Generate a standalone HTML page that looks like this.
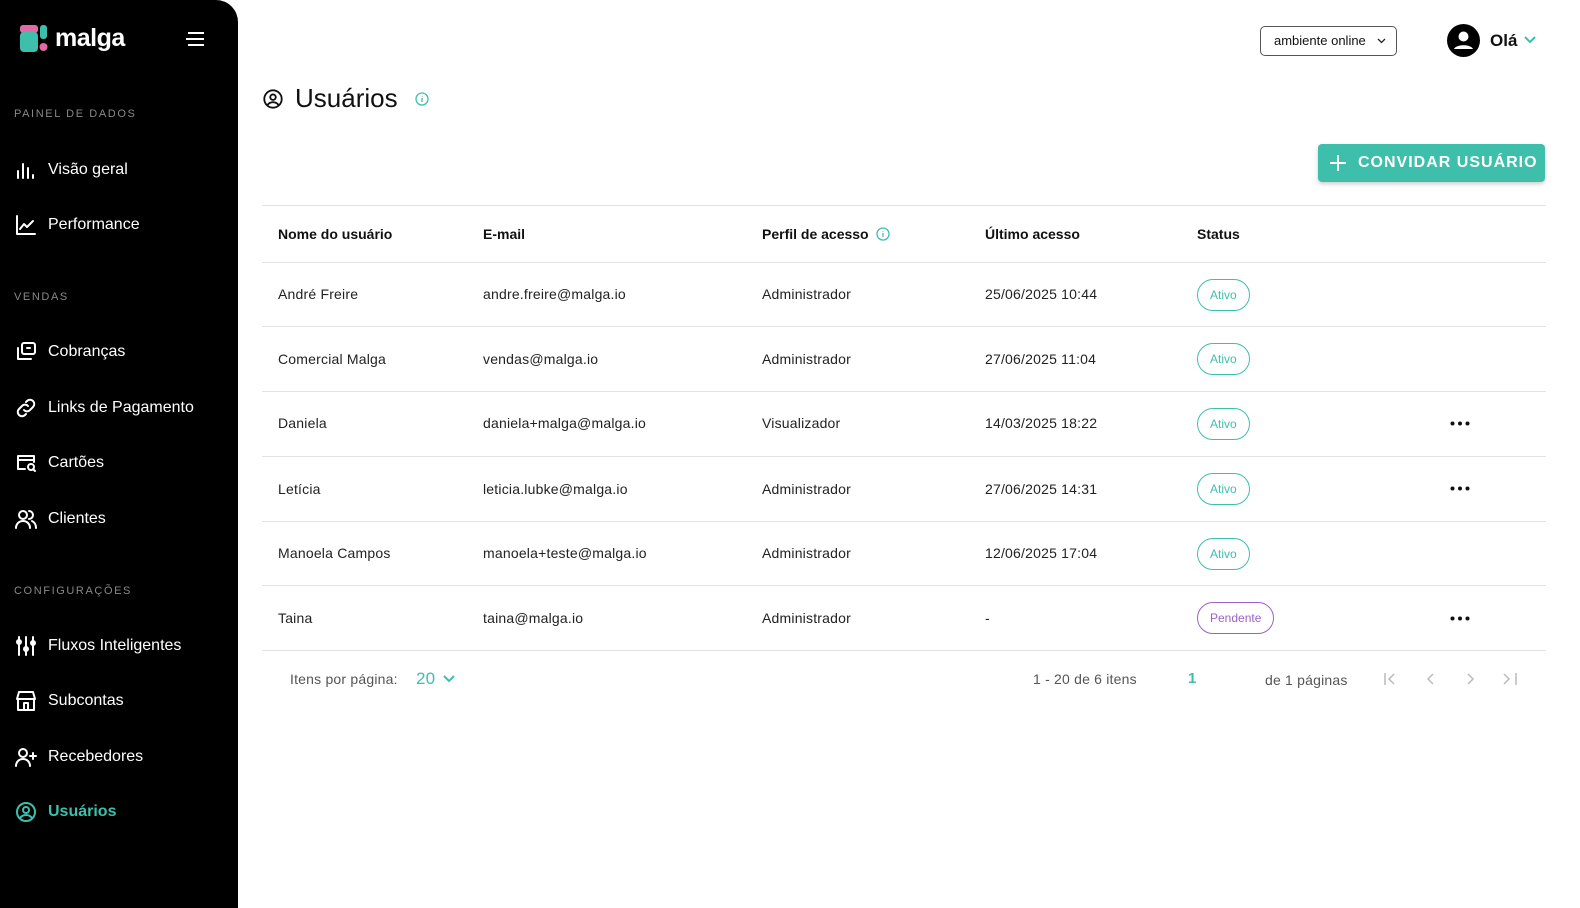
<!DOCTYPE html>
<html><head><meta charset="utf-8"><style>
*{box-sizing:border-box;margin:0;padding:0}
body{width:1580px;height:908px;background:#fff;font-family:"Liberation Sans",sans-serif;color:#111;position:relative;overflow:hidden}
.sb{position:absolute;left:0;top:0;width:238px;height:908px;background:#000;border-top-right-radius:22px;color:#fff}
.sec{position:absolute;left:14px;font-size:11px;letter-spacing:1.6px;color:#888}
.it{position:absolute;left:14px;display:flex;align-items:center;font-size:16px;color:#fff}
.it svg{width:24px;height:24px;margin-right:10px;fill:none;stroke:#fff;stroke-width:2;stroke-linecap:round;stroke-linejoin:round}
.abs{position:absolute}
.th{position:absolute;top:226px;font-size:14px;font-weight:bold;color:#111}
.line{position:absolute;left:262px;width:1284px;height:1px;background:#e3e3e3}
.cell{position:absolute;font-size:14px;color:#222;letter-spacing:.2px}
.badge{position:absolute;left:1197px;height:32px;border:1px solid #3dbfab;border-radius:16px;color:#3dbfab;font-size:12px;line-height:30px;padding:0 12px}
.dots{position:absolute;left:1450px}
</style></head><body>
<div class="sb">
  <svg class="abs" style="left:20px;top:25px" width="28" height="28" viewBox="0 0 28 28"><rect x="0" y="0" width="18" height="8" rx="3" fill="#e06aa6"/><rect x="0" y="7" width="18" height="20" rx="4" fill="#3dbfab"/><rect x="20" y="0" width="7" height="14" rx="3" fill="#3dbfab"/><circle cx="23.5" cy="22" r="4" fill="#e06aa6"/></svg>
  <div class="abs" style="left:55px;top:24px;font-size:25px;font-weight:bold;letter-spacing:-.5px">malga</div>
  <svg class="abs" style="left:184px;top:31px" width="22" height="16" viewBox="0 0 22 16" stroke="#fff" stroke-width="2"><path d="M4 2H20M2 8H20M4 14H20"/></svg>
  <div class="sec" style="top:108px">PAINEL DE DADOS</div>
  <div class="it" style="top:158px"><svg viewBox="0 0 24 24"><path d="M4 20V13M9 20V6M14 20V10M19 20V17"/></svg>Visão geral</div>
  <div class="it" style="top:213px"><svg viewBox="0 0 24 24"><path d="M3 3V21H21M6 16L10 11L13 14L19 8"/></svg>Performance</div>
  <div class="sec" style="top:291px">VENDAS</div>
  <div class="it" style="top:340px"><svg viewBox="0 0 24 24"><rect x="8" y="3" width="13" height="11" rx="2"/><path d="M4 8V19H17M13 8H16"/></svg>Cobranças</div>
  <div class="it" style="top:396px"><svg viewBox="0 0 24 24"><path d="M10 14a4 4 0 0 0 6 0l3-3a4 4 0 0 0-6-6l-1 1M14 10a4 4 0 0 0-6 0l-3 3a4 4 0 0 0 6 6l1-1"/></svg>Links de Pagamento</div>
  <div class="it" style="top:451px"><svg viewBox="0 0 24 24"><path d="M11 18H4V5H20V11M4 9H20"/><circle cx="17" cy="16" r="3"/><path d="M19 18L21 20"/></svg>Cartões</div>
  <div class="it" style="top:507px"><svg viewBox="0 0 24 24"><circle cx="9" cy="8" r="4"/><path d="M2 21c0-4 3-7 7-7s7 3 7 7M15 4a4 4 0 0 1 0 8M18 14c2 1 4 3 4 7"/></svg>Clientes</div>
  <div class="sec" style="top:585px">CONFIGURAÇÕES</div>
  <div class="it" style="top:634px"><svg viewBox="0 0 24 24"><path d="M5 3V21M12 3V21M19 3V21"/><circle cx="5" cy="8" r="2"/><circle cx="12" cy="15" r="2"/><circle cx="19" cy="9" r="2"/></svg>Fluxos Inteligentes</div>
  <div class="it" style="top:689px"><svg viewBox="0 0 24 24"><path d="M4 10V21H20V10M3 10L5 3H19L21 10ZM10 21V14H14V21"/></svg>Subcontas</div>
  <div class="it" style="top:745px"><svg viewBox="0 0 24 24"><circle cx="9" cy="8" r="4"/><path d="M2 21c0-4 3-7 7-7s7 3 7 7M19 8V14M16 11H22"/></svg>Recebedores</div>
  <div class="it" style="top:800px;color:#3dbfab;font-weight:bold"><svg viewBox="0 0 24 24" style="stroke:#3dbfab"><circle cx="12" cy="12" r="9"/><circle cx="12" cy="10" r="3"/><path d="M6 18c3-4 9-4 12 0"/></svg>Usuários</div>
</div>

<div class="abs" style="left:1260px;top:26px;width:137px;height:30px;border:1px solid #555;border-radius:5px;font-size:13px;line-height:28px;padding-left:13px">ambiente online</div>
<svg class="abs" style="left:1377px;top:38px" width="9" height="6" viewBox="0 0 9 6"><path d="M1 1L4.5 4.5L8 1" stroke="#222" stroke-width="1.3" fill="none"/></svg>
<svg class="abs" style="left:1447px;top:24px" width="33" height="33" viewBox="0 0 33 33"><circle cx="16.5" cy="16.5" r="16.5" fill="#000"/><circle cx="16.5" cy="12.5" r="5" fill="#fff"/><path d="M7 25c2-5 17-5 19 0z" fill="#fff"/></svg>
<div class="abs" style="left:1490px;top:31px;font-size:17px;font-weight:bold">Olá</div>
<svg class="abs" style="left:1524px;top:36px" width="12" height="8" viewBox="0 0 12 8"><path d="M1 1L6 6L11 1" stroke="#3dbfab" stroke-width="2" fill="none"/></svg>

<svg class="abs" style="left:262px;top:88px" width="22" height="22" viewBox="0 0 24 24" fill="none" stroke="#111" stroke-width="2"><circle cx="12" cy="12" r="9.5"/><circle cx="12" cy="10" r="3"/><path d="M6 18.5c3-4 9-4 12 0"/></svg>
<div class="abs" style="left:295px;top:83px;font-size:26px">Usuários</div>
<svg class="abs" style="left:415px;top:92px" width="14" height="14" viewBox="0 0 14 14" fill="none" stroke="#3dbfab" stroke-width="1.3"><circle cx="7" cy="7" r="6"/><path d="M7 6V10M7 4V4.5"/></svg>

<div class="abs" style="left:1318px;top:144px;width:227px;height:38px;background:#3dbfab;border-radius:4px;box-shadow:0 2px 4px rgba(0,0,0,.2);color:#fff;font-size:16px;font-weight:bold;letter-spacing:1px;line-height:38px;padding-left:40px">CONVIDAR USUÁRIO</div>
<svg class="abs" style="left:1329px;top:154px" width="18" height="18" viewBox="0 0 18 18" stroke="#fff" stroke-width="2"><path d="M9 1V17M1 9H17"/></svg>

<div class="line" style="top:205px"></div>
<div class="th" style="left:278px">Nome do usuário</div>
<div class="th" style="left:483px">E-mail</div>
<div class="th" style="left:762px">Perfil de acesso</div>
<svg class="abs" style="left:876px;top:227px" width="14" height="14" viewBox="0 0 14 14" fill="none" stroke="#3dbfab" stroke-width="1.3"><circle cx="7" cy="7" r="6"/><path d="M7 6V10M7 4V4.5"/></svg>
<div class="th" style="left:985px">Último acesso</div>
<div class="th" style="left:1197px">Status</div>
<div class="line" style="top:262px"></div>

<div class="cell" style="left:278px;top:286px">André Freire</div><div class="cell" style="left:483px;top:286px">andre.freire@malga.io</div><div class="cell" style="left:762px;top:286px">Administrador</div><div class="cell" style="left:985px;top:286px">25/06/2025 10:44</div><div class="badge" style="top:279px">Ativo</div>
<div class="line" style="top:326px"></div>
<div class="cell" style="left:278px;top:351px">Comercial Malga</div><div class="cell" style="left:483px;top:351px">vendas@malga.io</div><div class="cell" style="left:762px;top:351px">Administrador</div><div class="cell" style="left:985px;top:351px">27/06/2025 11:04</div><div class="badge" style="top:343px">Ativo</div>
<div class="line" style="top:391px"></div>
<div class="cell" style="left:278px;top:415px">Daniela</div><div class="cell" style="left:483px;top:415px">daniela+malga@malga.io</div><div class="cell" style="left:762px;top:415px">Visualizador</div><div class="cell" style="left:985px;top:415px">14/03/2025 18:22</div><div class="badge" style="top:408px">Ativo</div><svg class="dots" style="top:421px" width="20" height="5"><circle cx="2.5" cy="2.5" r="2" fill="#111"/><circle cx="10" cy="2.5" r="2" fill="#111"/><circle cx="17.5" cy="2.5" r="2" fill="#111"/></svg>
<div class="line" style="top:456px"></div>
<div class="cell" style="left:278px;top:481px">Letícia</div><div class="cell" style="left:483px;top:481px">leticia.lubke@malga.io</div><div class="cell" style="left:762px;top:481px">Administrador</div><div class="cell" style="left:985px;top:481px">27/06/2025 14:31</div><div class="badge" style="top:473px">Ativo</div><svg class="dots" style="top:486px" width="20" height="5"><circle cx="2.5" cy="2.5" r="2" fill="#111"/><circle cx="10" cy="2.5" r="2" fill="#111"/><circle cx="17.5" cy="2.5" r="2" fill="#111"/></svg>
<div class="line" style="top:521px"></div>
<div class="cell" style="left:278px;top:545px">Manoela Campos</div><div class="cell" style="left:483px;top:545px">manoela+teste@malga.io</div><div class="cell" style="left:762px;top:545px">Administrador</div><div class="cell" style="left:985px;top:545px">12/06/2025 17:04</div><div class="badge" style="top:538px">Ativo</div>
<div class="line" style="top:585px"></div>
<div class="cell" style="left:278px;top:610px">Taina</div><div class="cell" style="left:483px;top:610px">taina@malga.io</div><div class="cell" style="left:762px;top:610px">Administrador</div><div class="cell" style="left:985px;top:610px">-</div><div class="badge" style="top:602px;border-color:#9a62c9;color:#9a62c9">Pendente</div><svg class="dots" style="top:616px" width="20" height="5"><circle cx="2.5" cy="2.5" r="2" fill="#111"/><circle cx="10" cy="2.5" r="2" fill="#111"/><circle cx="17.5" cy="2.5" r="2" fill="#111"/></svg>
<div class="line" style="top:650px"></div>

<div class="cell" style="left:290px;top:671px;color:#555">Itens por página:</div>
<div class="cell" style="left:416px;top:669px;color:#3dbfab;font-size:17px">20</div>
<svg class="abs" style="left:443px;top:675px" width="12" height="8" viewBox="0 0 12 8"><path d="M1 1L6 6L11 1" stroke="#3dbfab" stroke-width="2" fill="none"/></svg>
<div class="cell" style="left:1033px;top:671px;color:#555">1 - 20 de 6 itens</div>
<div class="cell" style="left:1188px;top:670px;color:#3dbfab;font-weight:bold;font-size:15px">1</div>
<div class="cell" style="left:1265px;top:672px;color:#555">de 1 páginas</div>
<svg class="abs" style="left:1382px;top:671px" width="140" height="16" viewBox="0 0 140 16" fill="none" stroke="#bbb" stroke-width="1.5"><path d="M3 2V14M12 3L7 8L12 13M51 3L46 8L51 13M86 3L91 8L86 13M122 3L127 8L122 13M134 2V14"/></svg>
</body></html>
